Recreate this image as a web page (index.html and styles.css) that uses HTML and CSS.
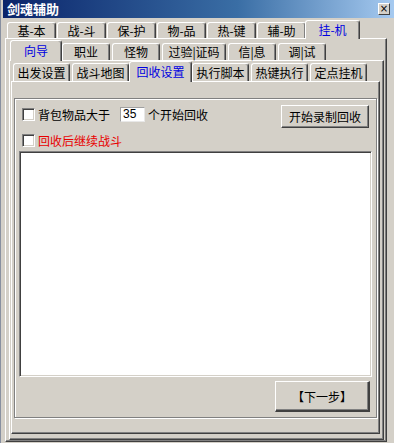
FILE: index.html
```html
<!DOCTYPE html>
<html lang="zh-CN">
<head>
  <meta charset="UTF-8">
  <title>剑魂辅助</title>
  <link rel="stylesheet" href="styles.css">
</head>
<body>
  <div class="window">
    <div class="titlebar">
      <span class="title">剑魂辅助</span>
      <span class="close">×</span>
    </div>

    <div class="tabs row1">
      <div class="tab">基-本</div>
      <div class="tab">战-斗</div>
      <div class="tab">保-护</div>
      <div class="tab">物-品</div>
      <div class="tab">热-键</div>
      <div class="tab">辅-助</div>
      <div class="tab on">挂-机</div>
    </div>

    <div class="panel page1">
      <div class="tabs row2">
        <div class="tab on">向导</div>
        <div class="tab">职业</div>
        <div class="tab">怪物</div>
        <div class="tab wide">过验|证码</div>
        <div class="tab">信|息</div>
        <div class="tab">调|试</div>
      </div>

      <div class="panel page2">
        <div class="tabs row3">
          <div class="tab">出发设置</div>
          <div class="tab">战斗地图</div>
          <div class="tab on">回收设置</div>
          <div class="tab">执行脚本</div>
          <div class="tab">热键执行</div>
          <div class="tab">定点挂机</div>
        </div>

        <div class="panel page3">
          <div class="group">
            <div class="opt-row first">
              <div class="opt">
                <span class="check"></span>
                <span>背包物品大于</span>
                <span class="num">35</span>
                <span>个开始回收</span>
              </div>
              <div class="btn rec">开始录制回收</div>
            </div>
            <div class="opt-row">
              <div class="opt red">
                <span class="check"></span>
                <span>回收后继续战斗</span>
              </div>
            </div>
            <div class="list"></div>
            <div class="foot">
              <div class="btn next">【下一步】</div>
            </div>
          </div>
        </div>
      </div>
    </div>
  </div>
</body>
</html>
```

FILE: styles.css
```css
* {
  box-sizing: border-box;
}
html, body {
  margin: 0;
  padding: 0;
}
body {
  width: 394px;
  height: 443px;
  overflow: hidden;
  background: #d4d0c8;
  font-family: "Noto Sans CJK SC", sans-serif;
  font-size: 12px;
  color: #000;
}
.window {
  height: 443px;
  padding: 0 7px 0 4px;
  border-left: 1px solid #8890a0;
  position: relative;
}
.titlebar {
  height: 18px;
  margin: 0 -7px 0 -2px;
  padding: 0 4px 0 4px;
  display: flex;
  align-items: center;
  justify-content: space-between;
  background: linear-gradient(to right, #0a246a, #3a6ea5 60%, #a6caf0);
}
.title {
  color: #fff;
  font-weight: bold;
  font-size: 13px;
  line-height: 18px;
  letter-spacing: 0;
}
.close {
  width: 12px;
  height: 12px;
  background: #d4d0c8;
  border-top: 1px solid #fff;
  border-left: 1px solid #fff;
  border-right: 1px solid #404040;
  border-bottom: 1px solid #404040;
  font-family: "DejaVu Sans", sans-serif;
  font-size: 10px;
  line-height: 9px;
  text-align: center;
  color: #000;
}

/* tab strips */
.tabs {
  display: flex;
  align-items: flex-end;
}
.tab {
  height: 16px;
  line-height: 16px;
  width: 48px;
  margin-right: 2px;
  text-align: center;
  white-space: nowrap;
  background: #d4d0c8;
  border-top: 1px solid #fff;
  border-left: 1px solid #fff;
  border-right: 1px solid #404040;
  box-shadow: inset -1px 0 #808080;
  border-radius: 3px 3px 0 0;
}
.tab.on {
  position: relative;
  z-index: 1;
  color: #0000e0;
  margin-left: -2px;
  margin-right: 0;
  margin-bottom: -1px;
}
.row1 {
  height: 20px;
  padding-left: 2px;
}
.row1 .tab {
  width: 49px;
  margin-right: 1px;
  height: 16px;
  line-height: 15px;
}
.row1 .tab.on {
  width: 55px;
  height: 19px;
  line-height: 17px;
}
.row2 {
  height: 21px;
  padding-left: 3px;
}
.row2 .tab {
  height: 17px;
  line-height: 16px;
}
.row2 .tab.on {
  width: 52px;
  height: 21px;
  line-height: 19px;
}
.row2 .tab.wide {
  width: 64px;
}
.row3 {
  height: 20px;
  padding-left: 2px;
}
.row3 .tab {
  width: 57px;
  height: 18px;
  line-height: 17px;
}
.row3 .tab.on {
  width: 63px;
  height: 21px;
  line-height: 19px;
}
.row3 .tab.on + .tab {
  margin-left: 0;
}

/* tab pages */
.panel {
  border-top: 1px solid #fff;
  border-left: 1px solid #fff;
  border-right: 1px solid #404040;
  border-bottom: 1px solid #404040;
  box-shadow: inset -1px -1px #808080;
}
.page1 {
  padding: 0 2px 1px 3px;
}
.page2 {
  padding: 0 3px 5px 1px;
}
.page3 {
  padding: 16px 2px 15px 2px;
}

/* group box */
.group {
  height: 320px;
  border: 1px solid #808080;
  box-shadow: inset 1px 1px #fff, 1px 1px #fff;
  padding: 6px 0 0 0;
}
.opt-row {
  display: flex;
  justify-content: space-between;
  align-items: flex-start;
  padding-left: 7px;
}
.opt-row.first {
  height: 23px;
}
.opt-row + .opt-row {
  margin-top: 5px;
}
.opt {
  display: flex;
  align-items: center;
  height: 15px;
  white-space: nowrap;
}
.opt-row.first .opt {
  margin-top: 2px;
}
.red {
  color: #e80000;
}
.check {
  width: 13px;
  height: 13px;
  margin-right: 3px;
  background: #fff;
  border-top: 1px solid #808080;
  border-left: 1px solid #808080;
  border-right: 1px solid #fff;
  border-bottom: 1px solid #fff;
  box-shadow: inset 1px 1px #404040, inset -1px -1px #d4d0c8;
}
.num {
  width: 25px;
  height: 15px;
  margin: 0 3px 0 10px;
  padding-left: 2px;
  background: #fff;
  border-top: 1px solid #a0a0a0;
  border-left: 1px solid #a0a0a0;
  border-right: 1px solid #e8e8e8;
  border-bottom: 1px solid #e8e8e8;
  font-family: "Liberation Sans", sans-serif;
  font-size: 12px;
  line-height: 13px;
}
.btn {
  background: #d4d0c8;
  border-top: 1px solid #fff;
  border-left: 1px solid #fff;
  border-right: 1px solid #404040;
  border-bottom: 1px solid #404040;
  box-shadow: inset -1px -1px #808080;
  text-align: center;
}
.rec {
  width: 88px;
  height: 23px;
  line-height: 21px;
  margin-right: 7px;
}
.list {
  height: 226px;
  margin: 3px 4px 0 4px;
  background: #fff;
  border-top: 1px solid #808080;
  border-left: 1px solid #808080;
  border-right: 1px solid #fff;
  border-bottom: 1px solid #fff;
  box-shadow: inset 1px 1px #404040, inset -1px -1px #d4d0c8;
}
.foot {
  display: flex;
  justify-content: flex-end;
  padding: 4px 6px 0 0;
}
.next {
  width: 95px;
  height: 31px;
  line-height: 29px;
  border-right-width: 2px;
  border-bottom-width: 2px;
}
```
